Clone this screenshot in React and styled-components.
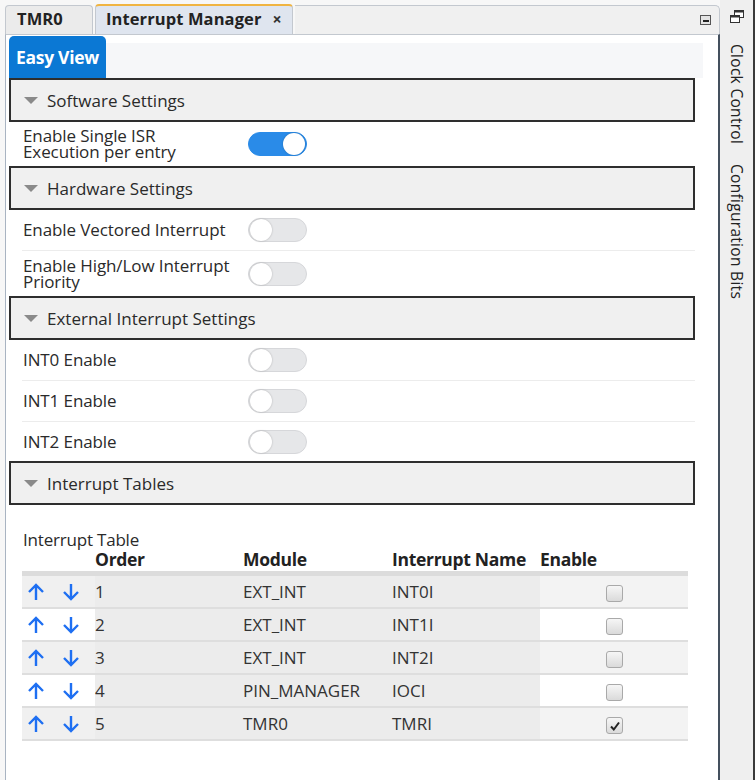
import React from "react";
import styled, { createGlobalStyle } from "styled-components";

const Global = createGlobalStyle`
  html, body { margin: 0; padding: 0; background: #fff; }
  body { font-family: "Open Sans", "Noto Sans", sans-serif; color: #2a2a2a; }
`;

const Screen = styled.div`
  width: 755px;
  height: 780px;
  display: flex;
  overflow: hidden;
  background: #fff;
`;

const Pane = styled.div`
  width: 720px;
  display: flex;
  flex-direction: column;
  padding-left: 5px;
  box-sizing: border-box;
  background: #f7f7f7;
`;

const TabBar = styled.div`
  height: 34px;
  display: flex;
  align-items: flex-end;
  box-sizing: border-box;
`;

const Tab = styled.div`
  height: ${(p) => (p.$active ? 30 : 29)}px;
  box-sizing: border-box;
  padding: 0 ${(p) => (p.$active ? 10 : 11)}px 3px;
  display: flex;
  align-items: center;
  gap: 11px;
  font-weight: 700;
  font-size: 16.5px;
  letter-spacing: 0.1px;
  color: #222;
  background: ${(p) => (p.$active ? "#dfe5ef" : "#ebebeb")};
  border: 1px solid #c3c8cf;
  border-bottom: none;
  border-top: ${(p) => (p.$active ? "2px solid #f0b441" : "1px solid #c3c8cf")};
  border-radius: 4px 4px 0 0;
  margin-right: 2px;
  width: ${(p) => p.$w}px;
  white-space: nowrap;
`;

const Close = styled.span`
  font-size: 16px;
  font-weight: 700;
  color: #333;
`;

const TabFill = styled.div`
  flex: 1;
  height: 29px;
  box-sizing: border-box;
  border: 1px solid #c3c8cf;
  border-bottom: none;
  border-left: none;
  border-radius: 0 5px 0 0;
  background: #f0f0f0;
  display: flex;
  justify-content: flex-end;
  align-items: center;
  padding-right: 8px;
`;

const MinBox = styled.div`
  width: 11px;
  height: 10px;
  border: 1px solid #555;
  background: #e4e4e4;
  display: flex;
  align-items: flex-end;
  justify-content: center;
  padding-bottom: 2px;
  box-sizing: border-box;
  &::after {
    content: "";
    width: 6px;
    height: 2px;
    background: #222;
  }
`;

const Content = styled.div`
  flex: 1;
  background: #fff;
  border-left: 1px solid #a9b4c2;
  border-right: 2px solid #44505e;
  border-top: 1px solid #c3c8cf;
  padding: 1px 0 0 3px;
  display: flex;
  flex-direction: column;
`;

const ViewStrip = styled.div`
  display: flex;
  align-items: flex-end;
  width: 694px;
  height: 42px;
`;

const ViewTab = styled.div`
  width: 97px;
  height: 42px;
  box-sizing: border-box;
  background: #0b78d4;
  color: #fff;
  font-weight: 700;
  font-size: 17.5px;
  display: flex;
  align-items: center;
  justify-content: center;
  border-radius: 5px 5px 0 0;
  letter-spacing: -0.3px;
  white-space: nowrap;
`;

const ViewFill = styled.div`
  flex: 1;
  height: 35px;
  background: #f6f7f9;
`;

const SectionHeader = styled.div`
  width: 686px;
  height: 44px;
  box-sizing: border-box;
  background: #f0f0f0;
  border: 2px solid #2e2e2e;
  display: flex;
  align-items: center;
  padding-left: 13px;
  gap: 9px;
  font-size: 17px;
  color: #2a2a2a;
  margin-top: ${(p) => p.$mt || 0}px;
`;

const Tri = styled.span`
  width: 0;
  height: 0;
  border-left: 7px solid transparent;
  border-right: 7px solid transparent;
  border-top: 7px solid #8a8a8a;
  margin-top: 1px;
`;

const Row = styled.div`
  width: 673px;
  margin-left: 13px;
  height: ${(p) => p.$h || 40}px;
  display: grid;
  grid-template-columns: 226px 1fr;
  align-items: center;
  border-bottom: ${(p) => (p.$divider ? "1px solid #ececec" : "none")};
  box-sizing: border-box;
`;

const Label = styled.div`
  font-size: 17px;
  line-height: ${(p) => (p.$two ? "16px" : "20px")};
  color: #2a2a2a;
  padding-left: 1px;
  white-space: nowrap;
  letter-spacing: -0.1px;
`;

const Track = styled.div`
  width: 59px;
  height: 24px;
  box-sizing: border-box;
  border-radius: 12px;
  background: ${(p) => (p.$on ? "#2a8be8" : "#e6e7e9")};
  border: 1px solid ${(p) => (p.$on ? "#2a8be8" : "#d6d7da")};
  display: flex;
  align-items: center;
  justify-content: ${(p) => (p.$on ? "flex-end" : "flex-start")};
  padding: 0 1px;
`;

const Knob = styled.div`
  width: 22px;
  height: 22px;
  border-radius: 50%;
  background: #fff;
  box-shadow: 0 0 2px rgba(0, 0, 0, 0.25);
`;

const Toggle = ({ on }) => (
  <Track $on={on}>
    <Knob />
  </Track>
);

const TableArea = styled.div`
  margin-left: 13px;
  margin-top: 26px;
  width: 666px;
  display: flex;
  flex-direction: column;
`;

const TableTitle = styled.div`
  font-size: 17px;
  line-height: 18px;
  color: #2a2a2a;
  padding-left: 1px;
  letter-spacing: -0.2px;
`;

const Grid = styled.div`
  display: grid;
  grid-template-columns: 73px 148px 149px 148px 148px;
`;

const HeadCell = styled.div`
  font-weight: 700;
  font-size: 17.5px;
  color: #222;
  height: 22px;
  line-height: 20px;
  border-bottom: 5px solid #dcdcdc;
  letter-spacing: -0.3px;
  white-space: nowrap;
`;

const Cell = styled.div`
  height: 33px;
  box-sizing: border-box;
  border-bottom: 2px solid #dedede;
  background: ${(p) => p.$bg};
  display: flex;
  align-items: center;
  justify-content: ${(p) => (p.$center ? "center" : "flex-start")};
  font-size: 17px;
  color: #333;
  gap: 17px;
  padding-left: ${(p) => (p.$pl ?? 0)}px;
  white-space: nowrap;
`;

const Check = styled.div`
  width: 17px;
  height: 17px;
  box-sizing: border-box;
  border: 1px solid #a9a9a9;
  border-radius: 3px;
  background: linear-gradient(#f6f6f6, #dadada);
  display: flex;
  align-items: center;
  justify-content: center;
  margin-left: 1px;
  margin-top: 4px;
`;

const ArrowUp = () => (
  <svg width="18" height="20" viewBox="0 0 18 20">
    <path d="M9 18V3M2 10l7-7 7 7" fill="none" stroke="#1e6ff2" strokeWidth="2.4" />
  </svg>
);
const ArrowDown = () => (
  <svg width="18" height="20" viewBox="0 0 18 20">
    <path d="M9 2v15M2 10l7 7 7-7" fill="none" stroke="#1e6ff2" strokeWidth="2.4" />
  </svg>
);

const Side = styled.div`
  width: 35px;
  background: #efefef;
  border-right: 2px solid #3a3a3a;
  box-sizing: border-box;
  display: flex;
  flex-direction: column;
  align-items: center;
  padding-top: 9px;
`;

const SideLabel = styled.div`
  writing-mode: vertical-rl;
  font-size: 15.5px;
  color: #222;
  margin-top: ${(p) => p.$mt}px;
  letter-spacing: 0.3px;
  white-space: nowrap;
`;

const RestoreIcon = () => (
  <svg width="16" height="15" viewBox="0 0 16 15">
    <rect x="5.5" y="1.5" width="9" height="7" fill="#fff" stroke="#333" />
    <rect x="5.5" y="1.5" width="9" height="2" fill="#333" />
    <rect x="1.5" y="6.5" width="9" height="7" fill="#fff" stroke="#333" />
    <rect x="1.5" y="6.5" width="9" height="2" fill="#333" />
  </svg>
);

const rows = [
  { n: 1, m: "EXT_INT", i: "INT0I", c: false },
  { n: 2, m: "EXT_INT", i: "INT1I", c: false },
  { n: 3, m: "EXT_INT", i: "INT2I", c: false },
  { n: 4, m: "PIN_MANAGER", i: "IOCI", c: false },
  { n: 5, m: "TMR0", i: "TMRI", c: true },
];

export default function App() {
  return (
    <>
      <Global />
      <Screen>
        <Pane>
          <TabBar>
            <Tab $w={88}>TMR0</Tab>
            <Tab $active $w={198}>
              Interrupt Manager <Close>×</Close>
            </Tab>
            <TabFill>
              <MinBox />
            </TabFill>
          </TabBar>
          <Content>
            <ViewStrip>
              <ViewTab>Easy View</ViewTab>
              <ViewFill />
            </ViewStrip>

            <SectionHeader>
              <Tri />
              Software Settings
            </SectionHeader>
            <Row $h={43}>
              <Label $two>
                Enable Single ISR
                <br />
                Execution per entry
              </Label>
              <Toggle on />
            </Row>

            <SectionHeader $mt={1}>
              <Tri />
              Hardware Settings
            </SectionHeader>
            <Row $divider $h={41}>
              <Label>Enable Vectored Interrupt</Label>
              <Toggle />
            </Row>
            <Row $h={45}>
              <Label $two>
                Enable High/Low Interrupt
                <br />
                Priority
              </Label>
              <Toggle />
            </Row>

            <SectionHeader>
              <Tri />
              External Interrupt Settings
            </SectionHeader>
            <Row $divider $h={41}>
              <Label>INT0 Enable</Label>
              <Toggle />
            </Row>
            <Row $divider $h={41}>
              <Label>INT1 Enable</Label>
              <Toggle />
            </Row>
            <Row $h={39}>
              <Label>INT2 Enable</Label>
              <Toggle />
            </Row>

            <SectionHeader>
              <Tri />
              Interrupt Tables
            </SectionHeader>

            <TableArea>
              <TableTitle>Interrupt Table</TableTitle>
              <Grid>
                <HeadCell />
                <HeadCell>Order</HeadCell>
                <HeadCell>Module</HeadCell>
                <HeadCell>Interrupt Name</HeadCell>
                <HeadCell>Enable</HeadCell>
                {rows.map((r, idx) => {
                  const stripe = idx % 2 === 0 ? "#f0f0f0" : "#ffffff";
                  const stripe2 = idx % 2 === 0 ? "#f3f3f3" : "#ffffff";
                  return (
                    <React.Fragment key={r.n}>
                      <Cell $bg={stripe} $pl={5}>
                        <ArrowUp />
                        <ArrowDown />
                      </Cell>
                      <Cell $bg="#ececec">{r.n}</Cell>
                      <Cell $bg="#ececec">{r.m}</Cell>
                      <Cell $bg="#ececec">{r.i}</Cell>
                      <Cell $bg={stripe2} $center>
                        <Check>
                          {r.c && (
                            <svg width="12" height="12" viewBox="0 0 12 12">
                              <path d="M2 6.5l2.8 3L10 2.5" fill="none" stroke="#222" strokeWidth="2" />
                            </svg>
                          )}
                        </Check>
                      </Cell>
                    </React.Fragment>
                  );
                })}
              </Grid>
            </TableArea>
          </Content>
        </Pane>
        <Side>
          <RestoreIcon />
          <SideLabel $mt={20}>Clock Control</SideLabel>
          <SideLabel $mt={20}>Configuration Bits</SideLabel>
        </Side>
      </Screen>
    </>
  );
}
